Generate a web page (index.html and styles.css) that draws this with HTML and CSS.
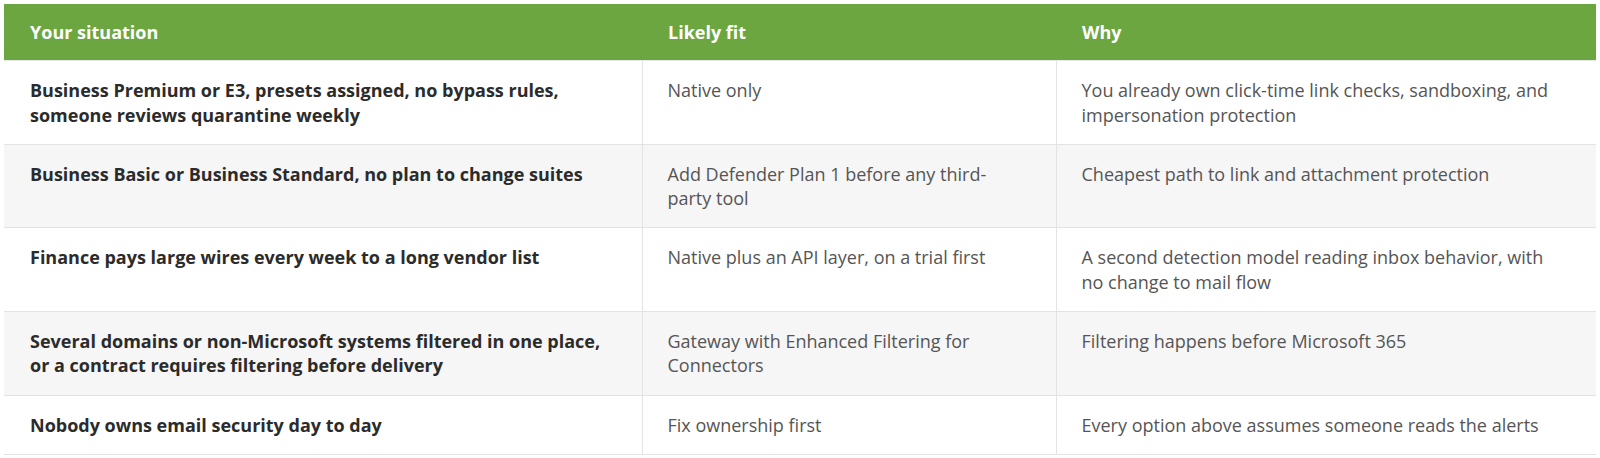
FILE: index.html
```html
<!DOCTYPE html>
<html lang="en">
<head>
<meta charset="utf-8">
<title>Email security fit</title>
<link rel="stylesheet" href="styles.css">
</head>
<body>
<div class="page">
<table class="fit-table">
  <colgroup>
    <col class="col-situation">
    <col class="col-fit">
    <col class="col-why">
  </colgroup>
  <thead>
    <tr>
      <th>Your situation</th>
      <th>Likely fit</th>
      <th>Why</th>
    </tr>
  </thead>
  <tbody>
    <tr>
      <td class="situation">Business Premium or E3, presets assigned, no bypass rules, someone reviews quarantine weekly</td>
      <td>Native only</td>
      <td>You already own click-time link checks, sandboxing, and impersonation protection</td>
    </tr>
    <tr>
      <td class="situation">Business Basic or Business Standard, no plan to change suites</td>
      <td>Add Defender Plan 1 before any third-party tool</td>
      <td>Cheapest path to link and attachment protection</td>
    </tr>
    <tr>
      <td class="situation">Finance pays large wires every week to a long vendor list</td>
      <td>Native plus an API layer, on a trial first</td>
      <td>A second detection model reading inbox behavior, with no change to mail flow</td>
    </tr>
    <tr>
      <td class="situation">Several domains or non-Microsoft systems filtered in one place, or a contract requires filtering before delivery</td>
      <td>Gateway with Enhanced Filtering for Connectors</td>
      <td>Filtering happens before Microsoft 365</td>
    </tr>
    <tr>
      <td class="situation">Nobody owns email security day to day</td>
      <td>Fix ownership first</td>
      <td>Every option above assumes someone reads the alerts</td>
    </tr>
  </tbody>
</table>
</div>
</body>
</html>
```

FILE: styles.css
```css
html, body {
  margin: 0;
  padding: 0;
  background: #ffffff;
}

.page {
  padding: 4px;
}

.fit-table {
  width: 1592px;
  border-collapse: collapse;
  table-layout: fixed;
  font-family: "Open Sans", "Liberation Sans", sans-serif;
  font-size: 18px;
  line-height: 24.3px;
  color: #555555;
}

.col-situation { width: 638px; }
.col-fit { width: 414px; }
.col-why { width: 540px; }

.fit-table th {
  background: #6ca640;
  color: #ffffff;
  font-weight: 700;
  text-align: left;
  padding: 16px 32px 16px 26px;
  border-bottom: 1px solid #e6e6e6;
}

.fit-table td {
  vertical-align: top;
  padding: 17px 32px 17px 25px;
  border-bottom: 1px solid #e3e3e3;
  border-left: 1px solid #e3e3e3;
}

.fit-table td.situation {
  border-left: none;
  padding-left: 26px;
  font-weight: 700;
  color: #2b2b2b;
}

.fit-table tbody tr:nth-child(even) td {
  background: #f6f6f6;
}
```
